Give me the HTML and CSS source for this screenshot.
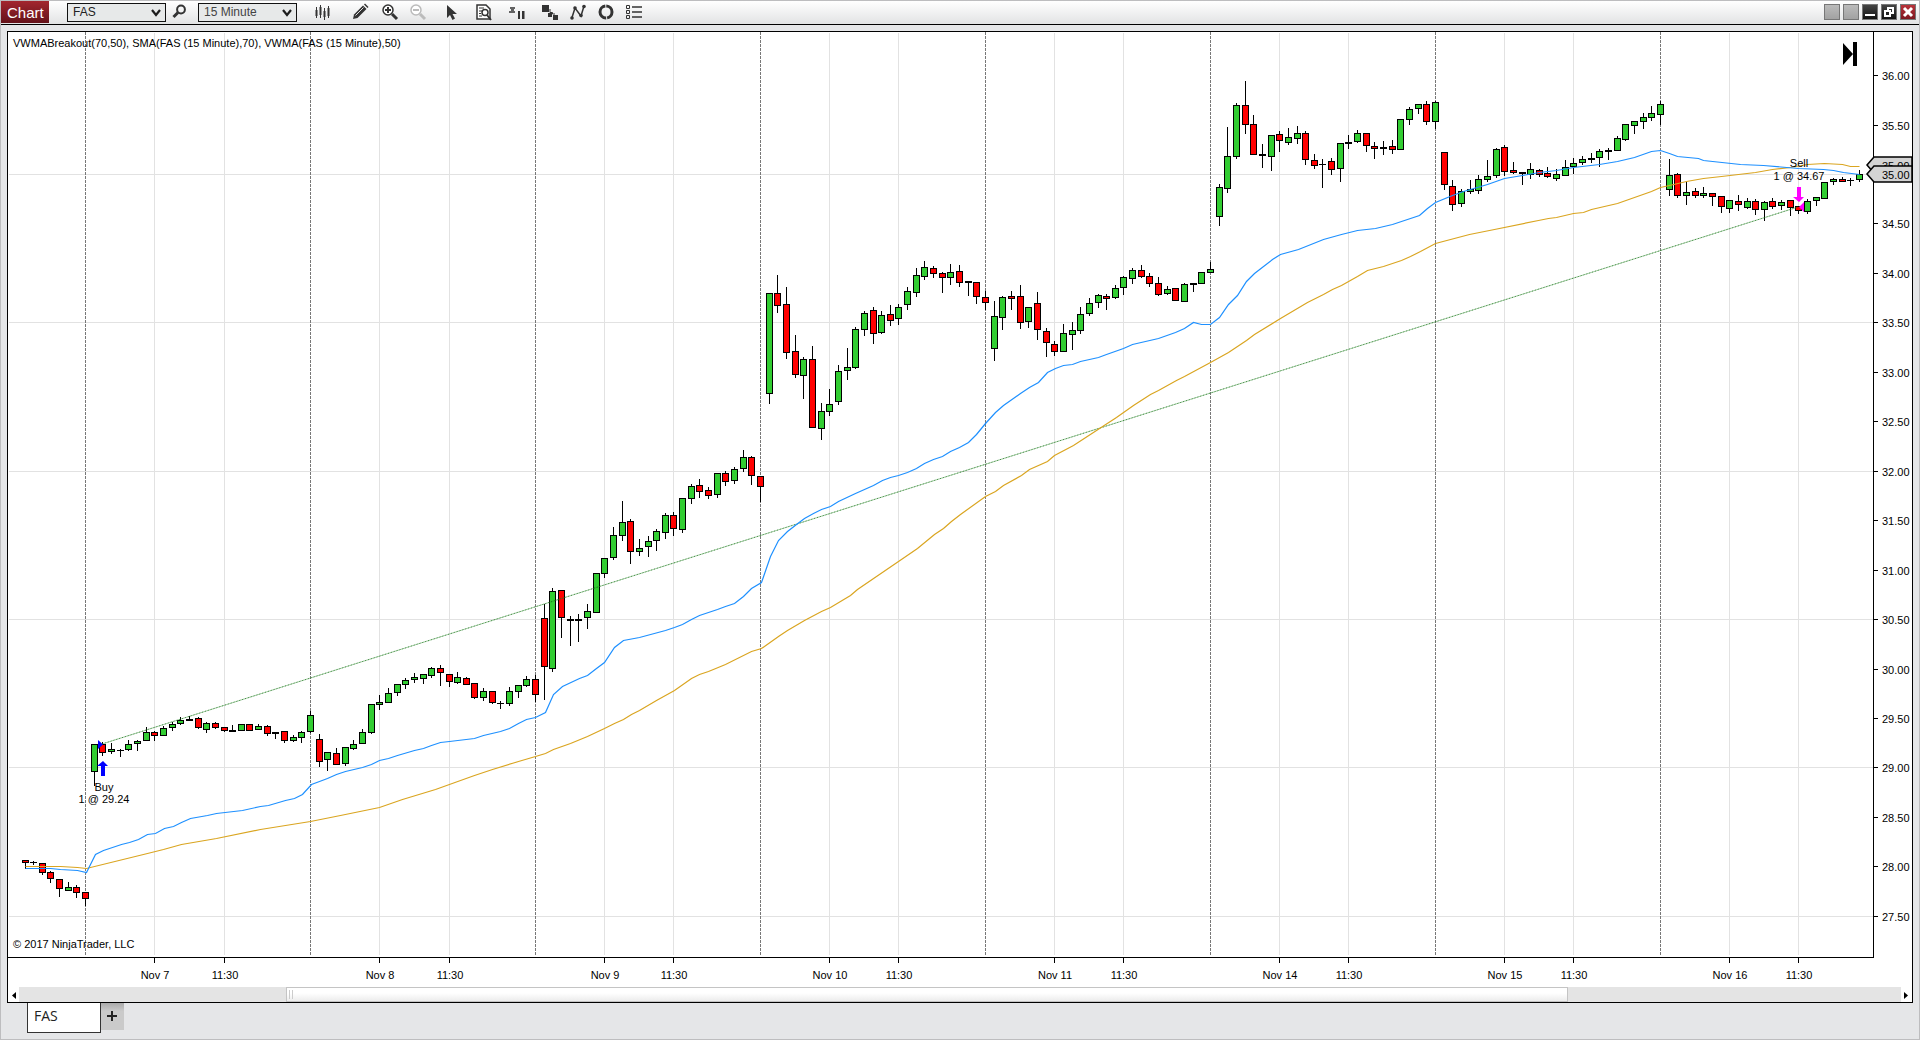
FILE: index.html
```html
<!DOCTYPE html>
<html lang="en">
<head>
<meta charset="utf-8">
<title>Chart - FAS</title>
<link rel="stylesheet" href="styles.css">
</head>
<body>
<div class="window">
  <header class="toolbar">
    <h1 class="badge">Chart</h1>
    <div class="picker">
      <select class="picker-field instrument" aria-label="Instrument"><option>FAS</option></select>
      <svg class="picker-arrow" viewBox="0 0 10 8"><path d="M1 1l4 5 4-5" fill="none" stroke="#1d1d1d" stroke-width="2.2"/></svg>
    </div>
    <button class="tool search" aria-label="Search instrument"><svg viewBox="0 0 18 18"><circle cx="11" cy="6.500" r="3.900" fill="none" stroke="#333" stroke-width="2"/><path d="M8 9.500L3.500 14" stroke="#333" stroke-width="3"/></svg></button>
    <div class="picker">
      <select class="picker-field" aria-label="Interval"><option>15 Minute</option></select>
      <svg class="picker-arrow" viewBox="0 0 10 8"><path d="M1 1l4 5 4-5" fill="none" stroke="#1d1d1d" stroke-width="2.2"/></svg>
    </div>
    <nav class="tools" aria-label="Chart tools">
      <button class="tool" aria-label="Chart style"><svg viewBox="0 0 18 18"><path d="M3.500 4v11M7.500 2v13M11.500 5v12M15.500 3v12" stroke="#333" stroke-width="1"/><path d="M2.500 7h2v6h-2zM6.500 4h2v8h-2zM10.500 8h2v6h-2zM14.500 5h2v8h-2z" fill="#333"/></svg></button>
      <button class="tool gap-l" aria-label="Drawing tools"><svg viewBox="0 0 18 18"><path d="M2 16l1-4.500L12 2.500l3.500 3.500-9 9z" fill="#333"/><path d="M4.500 12.500l8-8" stroke="#ddd" stroke-width="1"/><path d="M13 1.500l1-1 3.500 3.500-1 1z" fill="#333"/></svg></button>
      <button class="tool gap-s" aria-label="Zoom in"><svg viewBox="0 0 18 18"><circle cx="7" cy="7" r="5" fill="#fff" stroke="#333" stroke-width="1.500"/><path d="M4 7h6M7 4v6" stroke="#333" stroke-width="2"/><path d="M11 11l5 5" stroke="#333" stroke-width="3"/></svg></button>
      <button class="tool" aria-label="Zoom out" disabled><svg viewBox="0 0 18 18"><circle cx="7" cy="7" r="5" fill="#fff" stroke="#bbb" stroke-width="1.500"/><path d="M4 7h6" stroke="#bbb" stroke-width="2"/><path d="M11 11l5 5" stroke="#bbb" stroke-width="3"/></svg></button>
      <button class="tool gap-m" aria-label="Pointer"><svg viewBox="0 0 18 18"><path d="M5 2v13l3-3 2.500 5 2.500-1.500-2.500-4.500h4.500z" fill="#333"/></svg></button>
      <button class="tool gap-m" aria-label="Data box"><svg viewBox="0 0 18 18"><path d="M2 2h9l4 4v10H2z" fill="#fff" stroke="#333" stroke-width="1.500"/><path d="M4 5h5M4 8h3M4 10.500h2M4 13h3" stroke="#333" stroke-width="1"/><circle cx="10" cy="9.500" r="3" fill="#fff" stroke="#333" stroke-width="1.500"/><path d="M12 12l4 5" stroke="#333" stroke-width="2"/></svg></button>
      <button class="tool gap-m" aria-label="Chart trader"><svg viewBox="0 0 18 18"><path d="M2 5h5M1 9h6M3 7h3" stroke="#333" stroke-width="1.500"/><path d="M10 8h2v8h-2zM14 8h2.500v8H14z" fill="#333"/></svg></button>
      <button class="tool gap-m" aria-label="Data series"><svg viewBox="0 0 18 18"><path d="M1 2h7v7H1zM7 10h4v4H7zM12 12h5v5h-5z" fill="#333"/><path d="M9 6v3.500h2.500V11H14" fill="none" stroke="#333" stroke-width="1"/></svg></button>
      <button class="tool" aria-label="Indicators"><svg viewBox="0 0 18 18"><path d="M3 14.500l3-9.500 6 8 3-10" fill="none" stroke="#333" stroke-width="1.500"/><g fill="#333"><circle cx="3" cy="15" r="1.800"/><circle cx="6" cy="5" r="1.800"/><circle cx="12" cy="12.500" r="1.800"/><circle cx="15" cy="3.500" r="1.800"/></g></svg></button>
      <button class="tool" aria-label="Strategies"><svg viewBox="0 0 18 18"><circle cx="9" cy="9" r="6" fill="none" stroke="#333" stroke-width="3" stroke-dasharray="17.850 1" stroke-dashoffset="-9"/></svg></button>
      <button class="tool" aria-label="Properties"><svg viewBox="0 0 18 18"><path d="M1.500 2.500h3v3h-3zM1.500 7.500h3v3h-3zM1.500 12.500h3v3h-3z" fill="none" stroke="#333"/><path d="M7 4h10M7 9h10M7 14h10" stroke="#333" stroke-width="1.500"/></svg></button>
    </nav>
    <div class="controls">
      <button class="control blank" aria-label="Link instrument"></button>
      <button class="control blank" aria-label="Link interval"></button>
      <button class="control dark" aria-label="Minimize"><svg viewBox="0 0 14 14"><path d="M2 9h10v2H2z" fill="#fff"/></svg></button>
      <button class="control dark" aria-label="Restore"><svg viewBox="0 0 14 14"><path d="M6 3h5v5H6z" fill="none" stroke="#fff" stroke-width="2"/><path d="M3 6h5v5H3z" fill="#222" stroke="#fff" stroke-width="2"/></svg></button>
      <button class="control close" aria-label="Close"><svg viewBox="0 0 14 14"><path d="M3 3l8 8M11 3l-8 8" stroke="#fff" stroke-width="3"/></svg></button>
    </div>
  </header>
  <main class="frame">
    <div class="chart"><svg id="plot" class="plot" role="img" aria-label="FAS 15 minute candlestick chart"></svg></div>
    <div class="scroll">
      <button class="scroll-end" aria-label="Scroll left"><svg viewBox="0 0 11 14"><path d="M8 4v7L4 7.500z" fill="#000"/></svg></button>
      <div class="scroll-track"><div class="scroll-thumb"><i class="grip"></i><i class="grip"></i></div></div>
      <button class="scroll-end" aria-label="Scroll right"><svg viewBox="0 0 11 14"><path d="M3 4v7l4-3.500z" fill="#000"/></svg></button>
    </div>
  </main>
  <footer class="tabs">
    <button class="tab">FAS</button>
    <button class="add" aria-label="Add tab"><svg viewBox="0 0 12 12"><path d="M1 6h10M6 1v10" stroke="#222" stroke-width="2"/></svg></button>
  </footer>
</div>
<script src="chart.js"></script>
</body>
</html>
```
FILE: styles.css
```css
* { box-sizing: border-box; }
html, body { height: 100%; margin: 0; }
body { font-family: "Liberation Sans", Arial, sans-serif; font-size: 12px; color: #222; }
button, select { font: inherit; color: inherit; margin: 0; padding: 0; border-radius: 0; }
svg { display: block; }

.window {
  display: flex;
  flex-direction: column;
  height: 100vh;
  border: 1px solid #bdbdbf;
  background: #e5e6e8;
}

.toolbar {
  display: flex;
  align-items: center;
  flex: none;
  height: 24px;
  padding: 0 3px 1px 0;
  border-bottom: 1px solid #000;
  background: linear-gradient(#fff, #e2e3e4);
}
.badge {
  width: 48px;
  height: 22px;
  margin: 0 18px 0 0;
  padding-left: 6px;
  font-size: 15px;
  line-height: 23px;
  font-weight: normal;
  color: #fff;
  background: linear-gradient(#a3262e, #64121a);
}
.picker { position: relative; }
.picker-field {
  display: block;
  width: 99px;
  height: 19px;
  padding-left: 5px;
  appearance: none;
  border: 1px solid #111;
  background: #e7e9e9;
  color: #444;
}
.instrument { color: #222; }
.picker-arrow { position: absolute; right: 5px; top: 6px; width: 10px; height: 8px; pointer-events: none; }
.tool { width: 28px; height: 20px; border: 0; background: none; display: grid; place-items: center; }
.tool svg { width: 18px; height: 18px; }
.search { width: 32px; padding-right: 6px; }
.tools { display: flex; margin-left: 11px; }
.gap-s { margin-left: 2px; }
.gap-m { margin-left: 5px; }
.gap-l { margin-left: 10px; }
.controls { display: flex; gap: 3px; margin-left: auto; }
.control { width: 16px; height: 16px; border: 1px solid #777; }
.control svg { width: 14px; height: 14px; }
.blank { background: linear-gradient(#bbb, #a2a2a2); }
.dark { background: linear-gradient(#444, #111); }
.close { background: linear-gradient(#b8323a, #7d1820); }

.frame {
  display: flex;
  flex-direction: column;
  flex: 1;
  min-height: 0;
  margin: 6px 6px 0;
  border: 1px solid #000;
  background: #fff;
}
.chart { flex: 1; min-height: 0; }
.plot { width: 100%; height: 100%; }
.plot text { font-size: 11px; fill: #000; }

.scroll { display: flex; flex: none; height: 15px; }
.scroll-end { width: 11px; border: 0; background: #fff; }
.scroll-end svg { width: 11px; height: 14px; }
.scroll-track { flex: 1; background: #e4e4e4; }
.scroll-thumb {
  display: flex;
  gap: 2px;
  width: 68.1%;
  height: 100%;
  margin-left: 14.2%;
  padding: 2px;
  border: 1px solid #c4c4c4;
  background: linear-gradient(#fff 40%, #ececec);
}
.grip { width: 1px; background: #ccc; }

.tabs { display: flex; align-items: flex-start; flex: none; height: 36px; padding-left: 26px; }
.tab {
  width: 74px;
  height: 30px;
  padding: 0 0 3px 6px;
  border: 1px solid #333;
  border-top: 0;
  background: #fff;
  font: 500 14px/20px "Open Sans", sans-serif;
  text-align: left;
}
.add {
  display: grid;
  place-items: center;
  width: 23px;
  height: 27px;
  padding: 0 1px 2px 0;
  border: 0;
  background: linear-gradient(#aaa, #cacaca 30%);
}
.add svg { width: 12px; height: 12px; }
```
FILE: chart.js
```js
// One entry per bar: direction (g up, r down, k doji), body top, body bottom, wick top, wick bottom.
const bars = `
r860,863,860,869 k862,863,861,865 r863,873,863,875 r872,879,871,883 r879,889,879,897 g887,891,882,891 r887,893,885,898 r892,899,892,906
g744,772,744,786 r744,753,742,756 g749,752,743,754 k750,751,749,757 g744,750,740,751 g741,744,740,751 g732,741,727,741 r732,736,731,741 g728,736,726,736 g724,728,722,731 g720,724,717,725 k719,721,716,721 r718,728,717,729 g723,730,722,733 r723,728,722,729 r727,731,727,732 k730,732,725,732 g724,731,724,731 r724,731,724,731 g726,730,724,730 r726,734,725,736 k732,734,732,739 r731,741,731,743 g737,741,735,742 g732,738,731,743 g715,732,711,733
r739,762,734,767 g752,760,752,771 r753,765,748,765 g747,764,747,766 g744,749,740,750 g732,744,729,744 g704,733,704,734 g702,705,695,710 g693,703,688,703 g684,693,684,696 g680,685,678,689 g677,680,673,683 g674,679,674,684 g668,676,667,678 r668,673,665,686 r674,682,674,687 g677,683,672,684 r678,685,677,685 r683,698,683,699 g691,698,688,701 r691,703,691,704 k703,704,701,709 g691,704,687,706 g685,692,685,698 g679,686,676,687 r679,695,675,702
r618,667,604,700 g591,669,588,672 r590,618,590,638 k619,621,616,646 k619,621,614,642 g611,618,604,629 g573,613,573,613 g558,574,558,578 g535,558,527,560 g522,536,501,541 r521,552,519,564 g548,552,539,556 g541,547,536,557 g531,541,529,551 g515,533,513,539 r515,529,512,536 g498,530,498,533 g486,499,484,504 r485,492,479,498 r490,496,487,499 g473,495,473,498 r473,482,471,486 g469,481,467,484 g457,469,450,472 r457,476,456,485 r476,487,476,502
g293,394,293,404 r293,306,275,313 r304,353,287,359 r351,375,335,378 g359,376,357,399 r359,428,346,428 g411,429,403,440 g404,412,389,416 g371,402,365,405 g367,371,348,380 g329,368,327,369 g313,330,311,336 r310,334,307,344 g315,333,311,334 r314,321,305,326 g307,319,304,325 g291,305,287,310 g275,293,268,297 g267,277,261,280 r268,274,266,278 r273,278,272,293 g272,278,264,285 r271,283,265,287 k281,283,281,296 r282,297,282,304 r297,303,291,310
g316,349,301,361 g297,318,296,330 r296,299,291,310 r296,323,285,329 g307,322,307,328 r303,330,292,340 r331,343,328,357 r344,352,341,356 g333,352,324,352 g330,335,322,350 g314,331,307,334 g303,314,298,316 g295,303,294,308 r296,299,294,310 g288,298,285,299 g277,288,276,295 g270,279,268,284 r270,277,265,278 r276,284,273,287 r283,295,277,296 g289,294,286,295 r288,301,288,301 g284,302,283,302 k283,285,283,292 g272,284,272,284 g269,273,262,273
g187,217,184,226 g156,189,127,193 g105,157,103,159 r105,125,81,134 r124,155,115,155 k154,156,144,168 g135,157,135,171 r134,141,131,152 g137,143,128,145 g133,139,126,144 r133,160,131,165 r160,166,154,169 k164,165,159,188 r161,170,158,175 g143,169,143,182 k142,144,135,149 g133,142,130,143 r133,146,133,152 r146,149,142,159 k147,149,141,155 r146,150,140,154 g119,150,119,150 g109,120,107,125 g104,109,104,114 r104,122,101,125 g102,122,101,129
r152,185,152,190 r186,205,180,211 g191,204,189,207 g189,192,180,194 g179,191,175,194 g176,180,160,182 g149,176,148,178 r147,172,145,176 r170,173,162,174 k172,174,172,185 g169,175,163,179 r170,175,169,177 r173,177,167,178 g174,179,169,181 g167,176,160,176 g163,167,158,174 g159,163,156,165 k158,160,153,163 g151,158,149,167 k150,152,148,160 g138,151,136,151 g124,140,124,141 g121,126,121,134 g117,122,113,129 g113,118,106,121 g104,115,101,125
g175,190,159,196 r174,196,173,198 g192,196,182,205 r191,196,188,198 g193,196,187,198 r193,197,193,206 r196,207,196,213 g200,209,200,213 r201,205,195,211 g201,208,198,209 r201,210,199,215 g202,210,201,221 r201,207,198,209 g202,206,200,210 r200,208,200,216 r206,211,206,214 g201,212,199,214 g197,201,197,206 g182,199,182,199 g179,182,178,185 r179,182,177,182 k180,181,178,186 g174,180,170,182
`.trim().split(/\s+/).map(s => [s[0], ...s.slice(1).split(',').map(Number)]);

const vwma = '25,868 50,868 60,869 77,870 86,872 95,854 103,850 121,844 129,842 138,839 147,834 155,833 164,828 173,826 181,822 190,818 207,815 216,813 242,810 260,806 268,805 285,800 294,798 302,794 311,784 319,781 327,778 336,774 345,771 362,767 371,764 379,760 388,758 397,755 414,750 423,748 431,745 440,742 449,741 474,738 483,735 500,731 509,728 518,723 526,719 535,717 545,712 553,694 562,686 579,678 587,675 596,668 604,662 614,647 623,640 639,637 665,630 674,627 682,624 691,619 699,615 717,609 725,606 734,603 743,596 751,588 761,582 770,556 778,540 787,531 796,524 804,518 813,513 821,509 830,506 838,501 855,493 873,485 882,480 890,477 898,475 907,472 916,468 924,463 933,459 942,456 950,451 959,447 968,442 976,434 985,423 995,412 1003,405 1020,393 1029,387 1038,382 1047,372 1055,368 1063,365 1072,364 1080,361 1098,357 1106,354 1123,348 1132,344 1158,338 1175,332 1184,328 1193,322 1201,324 1210,324 1219,317 1228,304 1237,295 1246,281 1254,273 1272,259 1280,254 1298,249 1323,239 1341,234 1357,230 1375,228 1392,224 1401,221 1419,215 1427,208 1435,202 1452,195 1463,191 1487,184 1504,178 1522,175 1539,172 1556,170 1573,167 1599,164 1617,161 1634,157 1651,151 1660,150 1669,153 1677,156 1698,158 1703,160 1740,164 1763,165 1798,168 1823,169 1833,170 1843,172 1859,174';
const sma = '25,866 60,866 77,867 86,868 147,853 163,849 181,844 216,838 260,829 310,821 340,815 379,807 402,799 435,789 474,775 492,769 518,761 535,756 545,753 553,749 570,743 587,736 604,728 614,723 623,719 631,714 639,710 656,700 674,690 691,678 699,674 708,671 725,664 751,651 761,648 778,636 787,630 804,620 821,611 830,607 840,601 850,595 857,589 898,561 917,548 934,534 943,528 951,521 960,514 985,496 995,491 1003,485 1021,475 1029,469 1047,461 1054,455 1073,445 1096,430 1116,417 1133,405 1150,394 1158,390 1176,380 1184,376 1210,362 1228,352 1246,340 1254,334 1280,318 1307,302 1323,294 1332,289 1341,285 1357,276 1367,270 1383,266 1401,260 1410,256 1420,251 1435,243 1469,234 1494,229 1538,220 1548,218 1556,217 1573,213 1583,212 1591,209 1617,203 1651,191 1660,187 1669,185 1686,181 1703,178 1721,176 1755,172 1772,169 1790,167 1807,164 1824,163 1842,164 1850,166 1859,166';

const days = ['Nov 7', 'Nov 8', 'Nov 9', 'Nov 10', 'Nov 11', 'Nov 14', 'Nov 15', 'Nov 16'];
const BASE = { left: 8, top: 32, width: 1904, height: 955 };
const plot = document.getElementById('plot');

function draw() {
  const W = plot.clientWidth, H = plot.clientHeight;
  const right = W - 39, bottom = H - 30;
  const X = i => Math.floor(17 + i * (W - 69.5) / 212);
  const lx = v => (v - BASE.left) * W / BASE.width;
  const Y = v => Math.round((v - BASE.top) * H / BASE.height);
  const price = p => Y(174 + (35 - p) * 98.9);
  const out = [];
  const rect = (x, y, w, h, fill) => out.push(`<rect x="${x}" y="${y}" width="${w}" height="${h}" fill="${fill}"/>`);
  const text = (x, y, s, anchor = 'start') => out.push(`<text x="${x}" y="${y}" text-anchor="${anchor}">${s}</text>`);
  const line = (pts, color) => out.push(`<polyline points="${pts.split(' ').map(p => {
    const [x, y] = p.split(',').map(Number);
    return (lx(x) + .5) + ',' + (Y(y) + .5);
  }).join(' ')}" fill="none" stroke="${color}" stroke-width="1.2"/>`);

  for (let p = 27.5; p <= 35; p += 1.5) rect(1, price(p), right - 1, 1, '#e2e2e2');
  days.forEach((d, k) => {
    rect(X(15 + 26 * k), 1, 1, bottom - 3, '#e2e2e2');
    rect(X(23 + 26 * k), 1, 1, bottom - 3, '#e2e2e2');
    const s = X(7 + 26 * k) + .5;
    out.push(`<path d="M${s} 0V${bottom - 2}" stroke="#777" stroke-dasharray="3 1"/>`);
  });

  bars.forEach(([dir, t, b, wt, wb], i) => {
    const x = X(i), y = Y(t), h = Math.max(1, Y(b) - y);
    rect(x, Y(wt), 1, Y(wb) - Y(wt), '#000');
    rect(x - 3, y, 7, h, '#000');
    if (dir !== 'k') rect(x - 2, y + 1, 5, Math.max(1, h - 2), dir === 'g' ? '#32cd32' : '#ff0000');
  });

  const bx = X(9), by = Y(744), sx = X(205), sy = Y(207);
  out.push(`<path d="M${bx} ${by}L${sx} ${sy}" stroke="#2f8a2f" stroke-opacity=".45"/>`);
  out.push(`<path d="M${bx} ${by}L${sx} ${sy}" stroke="#006400" stroke-opacity=".6" stroke-dasharray="1 2"/>`);
  line(sma, '#daa520');
  line(vwma, '#1e90ff');

  out.push(`<path fill="#00f" d="M${bx - 4} ${by - 4}l5 4.500-5 4.500zM${bx + 1} ${by + 17}l5 5h-3v10h-4v-10h-4z"/>`);
  out.push(`<path fill="#f0f" d="M${sx + 6} ${sy - 5}l-5 5 5 5zM${sx + 1} ${sy - 5}l5-5h-3v-10h-4v10h-4z"/>`);
  text(bx + 2, by + 47, 'Buy', 'middle');
  text(bx + 2, by + 59, '1 @ 29.24', 'middle');
  text(sx + 1, sy - 40, 'Sell', 'middle');
  text(sx + 1, sy - 27, '1 @ 34.67', 'middle');

  rect(right, 0, 1, bottom + 1, '#000');
  rect(0, bottom, right, 1, '#000');
  for (let p = 27.5; p <= 36; p += .5) {
    rect(right + 1, price(p), 4, 1, '#000');
    text(right + 9, price(p) + 5, p.toFixed(2));
  }
  const tag = (y, s) => {
    out.push(`<path d="M${right - 6} ${y}l7 -8h38v16h-38z" fill="#d3d3d3" stroke="#000" stroke-width="1.500"/>`);
    text(right + 9, y + 5, s);
  };
  tag(price(35.09), '35.09');
  tag(price(35), '35.00');
  days.forEach((d, k) => {
    const a = X(15 + 26 * k), b = X(23 + 26 * k);
    rect(a, bottom, 1, 6, '#000');
    rect(b, bottom, 1, 6, '#000');
    text(a + 1, bottom + 22, d, 'middle');
    text(b + 1, bottom + 22, '11:30', 'middle');
  });

  text(5, 15, 'VWMABreakout(70,50), SMA(FAS (15 Minute),70), VWMA(FAS (15 Minute),50)');
  text(5, bottom - 9, '© 2017 NinjaTrader, LLC');
  out.push(`<path d="M${right - 30} 11l10 11-10 11zM${right - 20} 10h4v24h-4z"/>`);
  plot.innerHTML = out.join('');
}

draw();
window.addEventListener('resize', draw);
```
